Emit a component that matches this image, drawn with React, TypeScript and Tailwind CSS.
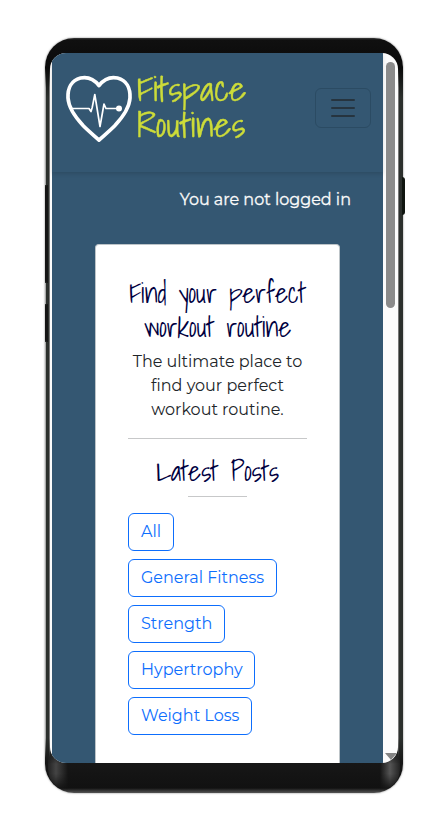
const bodyFont = "font-['Montserrat','Inter',sans-serif]";
const scriptFont = "font-['Shadows_Into_Light','Lato',sans-serif]";

function Logo() {
  return (
    <div className="flex items-start">
      <svg width="72" height="80" viewBox="0 0 72 80" className="block shrink-0" fill="none">
        <path d="M34 12.500C28.500 5.500 21.500 3.700 15.500 5C6.500 7.300 2.500 15 3 25C3.600 35.500 10.500 44.500 18.500 53C24 58.500 29 62.500 34 67C39 62.500 44 58.500 49.500 53C57.500 44.500 64.400 35.500 65 25C65.500 15 61.500 7.300 52.500 5C46.500 3.700 39.500 5.500 34 12.500Z" stroke="white" strokeWidth="3.700" strokeLinejoin="round" />
        <path d="M5 35.500H24L26 38.500L27.200 34.500L29.800 21.500L35 53.500L39 31L41 35.500H53" stroke="white" strokeWidth="1.700" strokeLinejoin="round" />
        <circle cx="54" cy="35.500" r="3" fill="white" />
      </svg>
      <div className={`-mt-[2px] flex origin-left scale-x-[1.11] flex-col whitespace-nowrap text-[34px] leading-[36px] text-[#cddc39] [-webkit-text-stroke:0.4px_#cddc39] ${scriptFont}`}>
        <span>Fitspace</span>
        <span>Routines</span>
      </div>
    </div>
  );
}

const categories = [
  { label: 'All', width: 'w-[46px]' },
  { label: 'General Fitness', width: 'w-[149px]' },
  { label: 'Strength', width: 'w-[97px]' },
  { label: 'Hypertrophy', width: 'w-[127px]' },
  { label: 'Weight Loss', width: 'w-[124px]' },
];

export default function App() {
  return (
    <main className={`h-[819px] w-[448px] overflow-hidden bg-white pl-[45px] pt-[38px] ${bodyFont}`}>
      <div className="relative h-[755px] w-[358px] rounded-[29px] bg-[linear-gradient(to_bottom,#3a3a3a_0,#101010_2px,#0a0a0a_30px,#2c302d_60px,#2c302d_700px,#171717_724px,#111_750px,#555_755px)] pb-[30px] pl-[5px] pr-[5px] pt-[15px] shadow-[0_0_2px_#777]">
        <span className="absolute left-0 top-[147px] h-[98px] w-[3px] rounded-l-sm bg-[#151515]" />
        <span className="absolute left-0 top-[266px] h-[38px] w-[3px] rounded-l-sm bg-[#151515]" />
        <span className="absolute right-[-2px] top-[139px] h-[38px] w-[3px] rounded-r-sm bg-[#101510]" />
        <span className="absolute left-0 top-[30px] h-[117px] w-px bg-[linear-gradient(to_bottom,transparent,#aaa_20px)]" />
        <span className="absolute left-0 top-[245px] h-[21px] w-px bg-[#aaa]" />
        <span className="absolute left-0 top-[304px] h-[416px] w-px bg-[linear-gradient(to_top,transparent,#aaa_20px)]" />
        <span className="absolute left-[4px] top-[30px] h-[690px] w-px bg-[linear-gradient(to_bottom,transparent,#777_20px,#777_670px,transparent)]" />
        <span className="absolute right-[4px] top-[30px] h-[690px] w-px bg-[linear-gradient(to_bottom,transparent,#777_20px,#777_670px,transparent)]" />
        <span className="absolute bottom-[3px] left-[3px] h-[38px] w-[20px] rounded-bl-[25px] bg-[linear-gradient(to_right,#222,#444_40%,#151515)] [mask-image:linear-gradient(to_bottom,transparent,black_12px,black_22px,transparent)]" />
        <span className="absolute bottom-[3px] right-[3px] h-[38px] w-[20px] rounded-br-[25px] bg-[linear-gradient(to_left,#222,#555_50%,#151515)] [mask-image:linear-gradient(to_bottom,transparent,black_12px,black_22px,transparent)]" />

        <div className="relative flex h-[710px] overflow-hidden rounded-[16px] bg-[#fcfcfc] pl-[2px]">
          <div className="flex w-[331px] shrink-0 flex-col bg-[#345772]">
            <header className="flex h-[119px] shrink-0 items-start justify-between pl-[13px] pr-[12px] pt-[20px] shadow-[0_2px_4px_rgba(0,0,0,0.13)]">
              <Logo />
              <button aria-label="Open navigation" className="mt-[15px] flex h-10 w-14 flex-col items-center justify-center gap-[6px] rounded-[6px] border border-[#2b4b63]">
                <span className="h-[2px] w-6 rounded-full bg-[#26343f]" />
                <span className="h-[2px] w-6 rounded-full bg-[#26343f]" />
                <span className="h-[2px] w-6 rounded-full bg-[#26343f]" />
              </button>
            </header>

            <p className="mr-8 mt-[16px] h-6 whitespace-nowrap text-right text-[16px] leading-6 text-[#fafafa] [-webkit-text-stroke:0.3px_#fafafa]">You are not logged in</p>

            <section className="ml-[43px] mt-[32px] flex w-[245px] grow flex-col rounded-t-[4px] border border-b-0 border-[#bdc4c8] bg-white px-8 pt-[31px]">
              <h1 className={`flex flex-col items-center whitespace-nowrap text-[28px] leading-[33.600px] tracking-[-0.3px] text-[#00003f] ${scriptFont}`}>
                <span>Find your perfect</span>
                <span>workout routine</span>
              </h1>
              <p className="mt-[6.800px] flex flex-col items-center whitespace-nowrap text-[16px] leading-6 text-[#212529]">
                <span>The ultimate place to</span>
                <span>find your perfect</span>
                <span>workout routine.</span>
              </p>
              <hr className="mt-[16px] border-[#c7c8c9]" />
              <h2 className={`mt-[15px] flex h-[42px] justify-center whitespace-nowrap text-[28px] leading-[34px] tracking-[-0.3px] text-[#00003f] ${scriptFont}`}>Latest Posts</h2>
              <hr className="w-[59px] self-center border-[#c7c8c9]" />
              <nav className="mt-4 flex flex-col items-start gap-2">
                {categories.map(({ label, width }) => (
                  <button key={label} className={`h-[38px] whitespace-nowrap rounded-[6px] border border-[#0d6efd] pl-[12px] text-left text-[16px] leading-6 text-[#0d6efd] ${width}`}>{label}</button>
                ))}
              </nav>
            </section>
          </div>
          <div className="flex w-[15px] flex-col items-center justify-between pb-[3px] pt-[9px]">
            <span className="h-[246px] w-[9px] rounded-full bg-[#8b8b8b]" />
            <span className="h-0 w-0 border-x-[6px] border-t-[7px] border-x-transparent border-t-[#858585]" />
          </div>
        </div>
      </div>
    </main>
  );
}
